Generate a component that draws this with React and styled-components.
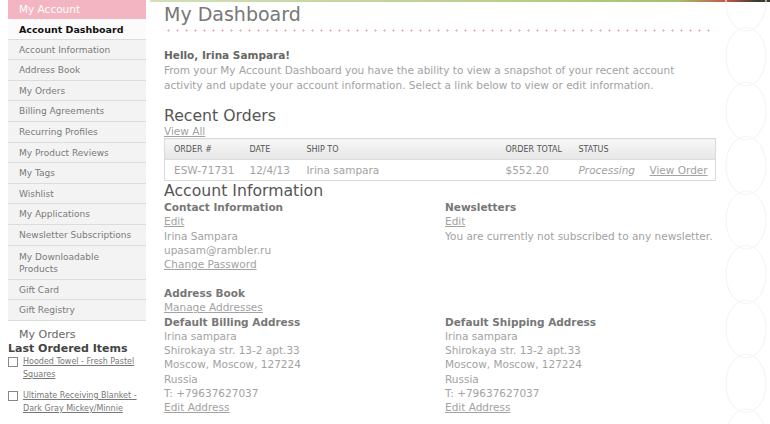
import React from "react";
import styled, { createGlobalStyle } from "styled-components";

const Global = createGlobalStyle`
  html, body { margin: 0; padding: 0; background: #fff; }
  body { font-family: "DejaVu Sans", "Liberation Sans", sans-serif; width: 770px; height: 424px; overflow: hidden; }
  * { box-sizing: border-box; }
`;

const Page = styled.div`
  position: relative;
  width: 770px;
  height: 424px;
  overflow: hidden;
`;

const TopBar = styled.div`
  position: absolute;
  top: 0;
  left: 150px;
  right: 0;
  height: 2px;
  background: linear-gradient(90deg, #d3e0b8 0%, #b9cd8a 60%, #a7bf6e 85%, #c2574a 93%, #3b3a30 98%);
`;

const Decor = styled.svg`
  position: absolute;
  top: 0;
  right: 0;
`;

const Layout = styled.div`
  display: flex;
  padding-left: 8px;
`;

const Side = styled.aside`
  width: 138px;
  flex: none;
`;

const NavHead = styled.div`
  background: #f4b5c2;
  color: #fff;
  font-size: 10.5px;
  height: 19px;
  padding: 3px 0 0 11px;
`;

const NavList = styled.ul`
  list-style: none;
  margin: 0;
  padding: 0;
  background: #f3f3f3;
`;

const NavItem = styled.li`
  border-bottom: 1px solid #dcdcdc;
  padding: ${p => (p.$tall ? "5px 11px 4px" : "1px 11px 0")};
  height: ${p => (p.$tall ? "34px" : "20.6px")};
  line-height: ${p => (p.$tall ? "12.5px" : "19px")};
  font-size: ${p => (p.$active ? "9.5px" : "9px")};
  font-weight: ${p => (p.$active ? "bold" : "normal")};
  color: ${p => (p.$active ? "#111" : "#7a7a7a")};
  background: ${p => (p.$active ? "#fbfbfb" : "transparent")};
  white-space: ${p => (p.$tall ? "normal" : "nowrap")};
`;

const MyOrders = styled.div`
  font-size: 11px;
  color: #666;
  padding: 7px 0 0 11px;
  line-height: 14px;
`;

const LastTitle = styled.div`
  font-size: 11px;
  font-weight: bold;
  color: #444;
  line-height: 13px;
  margin-bottom: 0;
`;

const OrderedItem = styled.div`
  display: flex;
  gap: 5px;
  margin-bottom: 8px;
`;

const Box = styled.span`
  flex: none;
  width: 10px;
  height: 10px;
  border: 1px solid #888;
  background: #fff;
  margin-top: 2px;
`;

const SmallLink = styled.a`
  font-size: 8px;
  line-height: 13px;
  color: #777;
  text-decoration: underline;
`;

const Main = styled.main`
  flex: 1;
  padding: 3px 54px 0 18px;
`;

const Title = styled.h1`
  margin: 0;
  font-size: 19px;
  font-weight: normal;
  color: #777;
  line-height: 23px;
  background-image: radial-gradient(circle, #eaaab8 0.9px, transparent 1.2px);
  background-size: 9px 3px;
  background-repeat: repeat-x;
  background-position: 0 100%;
  width: 550px;
  height: 29px;
`;

const Hello = styled.div`
  margin-top: 16px;
  font-size: 10.5px;
  font-weight: bold;
  color: #666;
  line-height: 15px;
`;

const Para = styled.p`
  margin: 0;
  font-size: 10.5px;
  color: #a2a2a2;
  line-height: 14.5px;
`;

const H2 = styled.h2`
  margin: ${p => p.$mt || "0"} 0 0;
  font-size: 15.7px;
  font-weight: normal;
  color: #555;
  line-height: 17px;
`;

const Link = styled.a`
  display: block;
  font-size: 10.5px;
  color: #a2a2a2;
  text-decoration: underline;
  line-height: 14.3px;
`;

const Table = styled.table`
  width: 552px;
  border-collapse: collapse;
  border: 1px solid #dadada;
  margin-top: 0;
  table-layout: fixed;
`;

const Th = styled.th`
  text-align: left;
  font-weight: normal;
  font-size: 8px;
  color: #555;
  padding: 0 0 0 9px;
  height: 21px;
  background: linear-gradient(#f7f7f7, #e6e6e6);
  border-bottom: 1px solid #ddd;
  white-space: nowrap;
`;

const Td = styled.td`
  font-size: 10.5px;
  color: #a2a2a2;
  padding: 0 0 0 9px;
  height: 21px;
  font-style: ${p => (p.$italic ? "italic" : "normal")};
  text-decoration: ${p => (p.$link ? "underline" : "none")};
  white-space: nowrap;
`;

const Cols = styled.div`
  display: grid;
  grid-template-columns: 281px 1fr;
  margin-top: 1px;
`;

const Block = styled.div`
  margin-bottom: ${p => p.$mb || "0"};
`;

const H3 = styled.div`
  font-size: 10.5px;
  font-weight: bold;
  color: #777;
  line-height: 14px;
`;

const Line = styled.div`
  font-size: 10.5px;
  color: #a2a2a2;
  line-height: 14.3px;
`;

const nav = [
  "Account Information",
  "Address Book",
  "My Orders",
  "Billing Agreements",
  "Recurring Profiles",
  "My Product Reviews",
  "My Tags",
  "Wishlist",
  "My Applications",
  "Newsletter Subscriptions",
];

const Circles = () => (
  <Decor width="50" height="424" viewBox="0 0 50 424">
    {[0, 1, 2, 3, 4, 5, 6, 7, 8].map(i => (
      <ellipse key={i} cx="26" cy={2 + i * 54.5} rx="20" ry="29" fill="none" stroke="#f5f5f5" strokeWidth="1.2" />
    ))}
  </Decor>
);

const Address = ({ title, name }) => (
  <Block>
    <H3>{title}</H3>
    <Line>{name}</Line>
    <Line>Shirokaya str. 13-2 apt.33</Line>
    <Line>Moscow, Moscow, 127224</Line>
    <Line>Russia</Line>
    <Line>T: +79637627037</Line>
    <Link href="#">Edit Address</Link>
  </Block>
);

export default function App() {
  return (
    <Page>
      <Global />
      <TopBar />
      <Circles />
      <Layout>
        <Side>
          <NavHead>My Account</NavHead>
          <NavList>
            <NavItem $active>Account Dashboard</NavItem>
            {nav.map(n => (
              <NavItem key={n}>{n}</NavItem>
            ))}
            <NavItem $tall>My Downloadable Products</NavItem>
            <NavItem>Gift Card</NavItem>
            <NavItem>Gift Registry</NavItem>
          </NavList>
          <MyOrders>My Orders</MyOrders>
          <LastTitle>Last Ordered Items</LastTitle>
          <OrderedItem>
            <Box />
            <SmallLink href="#">Hooded Towel - Fresh Pastel Squares</SmallLink>
          </OrderedItem>
          <OrderedItem>
            <Box />
            <SmallLink href="#">Ultimate Receiving Blanket - Dark Gray Mickey/Minnie</SmallLink>
          </OrderedItem>
          <OrderedItem>
            <Box />
            <SmallLink href="#">Hooded Towel - Sweet Monkey</SmallLink>
          </OrderedItem>
        </Side>
        <Main>
          <Title>My Dashboard</Title>
          <Hello>Hello, Irina Sampara!</Hello>
          <Para>
            From your My Account Dashboard you have the ability to view a snapshot of your recent account
            activity and update your account information. Select a link below to view or edit information.
          </Para>
          <H2 $mt="15px">Recent Orders</H2>
          <Link href="#">View All</Link>
          <Table>
            <colgroup>
              <col style={{ width: 76 }} />
              <col style={{ width: 57 }} />
              <col style={{ width: 199 }} />
              <col style={{ width: 73 }} />
              <col style={{ width: 71 }} />
              <col />
            </colgroup>
            <thead>
              <tr>
                <Th>ORDER #</Th>
                <Th>DATE</Th>
                <Th>SHIP TO</Th>
                <Th>ORDER TOTAL</Th>
                <Th>STATUS</Th>
                <Th />
              </tr>
            </thead>
            <tbody>
              <tr>
                <Td>ESW-71731</Td>
                <Td>12/4/13</Td>
                <Td>Irina sampara</Td>
                <Td>$552.20</Td>
                <Td $italic>Processing</Td>
                <Td $link>View Order</Td>
              </tr>
            </tbody>
          </Table>
          <H2 $mt="1px">Account Information</H2>
          <Cols>
            <Block $mb="15px">
              <H3>Contact Information</H3>
              <Link href="#">Edit</Link>
              <Line>Irina Sampara</Line>
              <Line>upasam@rambler.ru</Line>
              <Link href="#">Change Password</Link>
            </Block>
            <Block>
              <H3>Newsletters</H3>
              <Link href="#">Edit</Link>
              <Line>You are currently not subscribed to any newsletter.</Line>
            </Block>
            <Block>
              <H3>Address Book</H3>
              <Link href="#">Manage Addresses</Link>
            </Block>
            <div />
            <Address title="Default Billing Address" name="Irina sampara" />
            <Address title="Default Shipping Address" name="Irina sampara" />
          </Cols>
        </Main>
      </Layout>
    </Page>
  );
}
